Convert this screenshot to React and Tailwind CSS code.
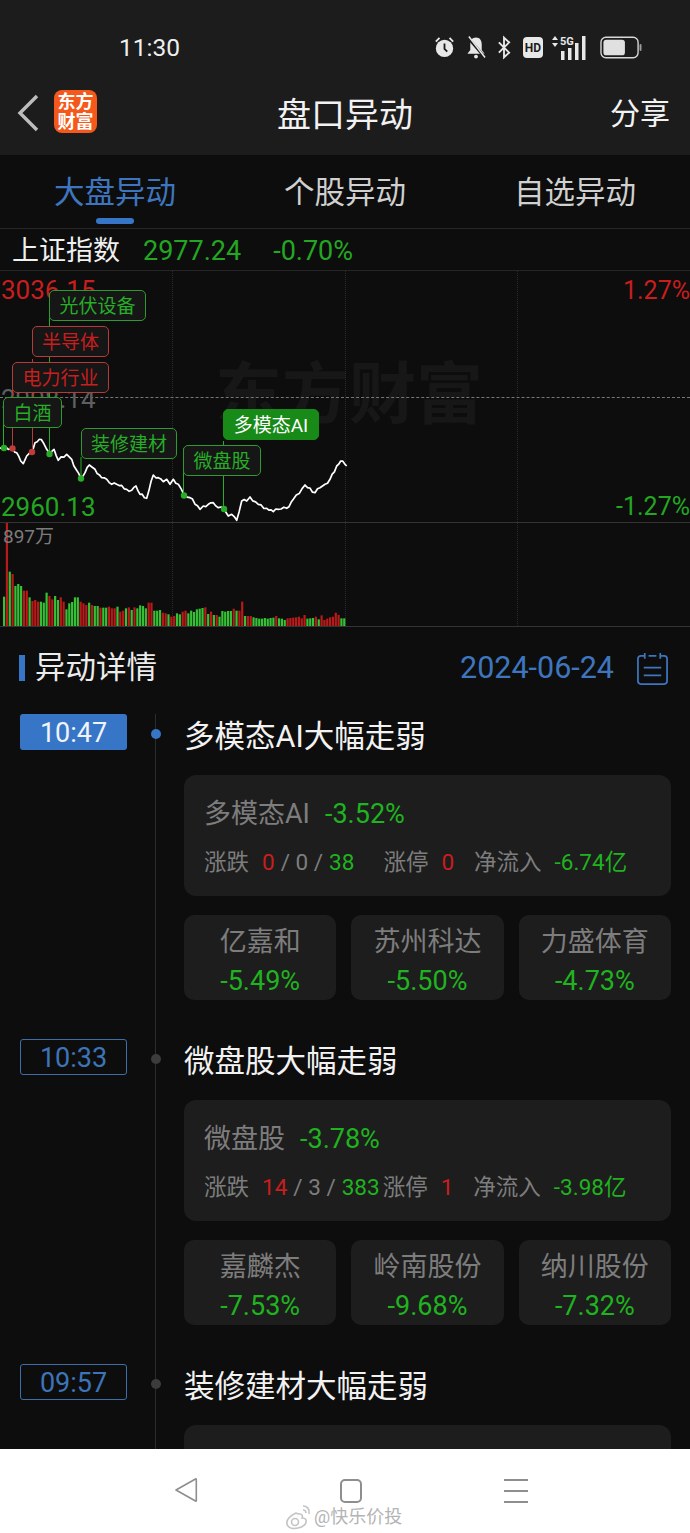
const F = { fontFamily: '"Roboto","Noto Sans CJK SC",sans-serif' };

const linePts = [[0,530],[12,532],[25,535],[38,533],[50,545],[62,570],[70,578],[80,555],[90,545],[97,542],[105,515],[118,505],[130,515],[140,535],[150,550],[162,535],[175,568],[200,550],[215,565],[228,595],[243,622],[255,605],[268,582],[285,595],[305,620],[320,625],[335,640],[350,640],[380,655],[395,658],[408,645],[420,670],[440,682],[460,612],[475,620],[490,632],[500,625],[510,640],[520,625],[535,640],[552,672],[570,680],[600,715],[610,705],[625,700],[640,695],[655,710],[672,715],[685,735],[695,730],[710,748],[725,690],[740,690],[750,678],[775,700],[800,712],[820,722],[835,715],[860,712],[880,685],[915,642],[945,665],[960,650],[975,640],[990,625],[1010,585],[1022,570],[1035,580],[1040,585]];

function jagged(pts) {
  const out = [];
  for (let i = 0; i < pts.length - 1; i++) {
    const [x0, y0] = pts[i];
    const [x1, y1] = pts[i + 1];
    const n = Math.max(1, Math.round((x1 - x0) / 8));
    for (let k = 0; k < n; k++) {
      const t = k / n;
      const noise = k === 0 ? 0 : (((i * 7 + k * 13) % 5) - 2) * 2.2;
      out.push([x0 + (x1 - x0) * t, y0 + (y1 - y0) * t + noise]);
    }
  }
  out.push(pts[pts.length - 1]);
  return out;
}
const linePath = jagged(linePts).map(([x, y]) => `${(x / 3).toFixed(1)},${(y / 3).toFixed(1)}`).join(' ');

const vols = 'g230 r0 g155 r162 g198 g192 g198 r212 r212 g232 r243 r240 r245 g245 g248 g218 r228 r238 g228 g240 r232 r245 g268 g250 g246 g232 g232 r245 r250 r255 g248 r255 g258 g258 r263 g263 g263 r260 r265 r265 g260 r275 r272 g265 r262 g270 r262 g265 g256 g258 g265 r248 r248 g272 g272 g270 r278 r280 g283 r290 r288 g280 g283 r275 r272 g280 g272 g276 g268 g266 g264 r262 g282 r275 g285 r285 g290 g273 g275 g273 g273 r266 g272 r272 r245 g288 r288 r288 g292 g294 g296 g296 g294 g296 g294 g293 r288 g295 g296 g300 r295 r294 r293 r292 r290 r295 r285 g296 g295 g294 r290 g298 r286 r300 r296 r292 r290 r278 r285 g295 g295'.split(' ');

const G = '#27ad27';
const R = '#c81e1e';

function Tag({ left, top, w, h = 31, color, text, solid, children }) {
  return (
    <div
      className="absolute flex items-center justify-center rounded-[5px] border pt-[2px] text-[19px] leading-none"
      style={{
        left, top, width: w, height: h, borderColor: color,
        color: solid ? '#ffffff' : text,
        background: solid ? '#178a17' : '#161616',
      }}
    >
      {children}
    </div>
  );
}

function Chart() {
  return (
    <div className="relative h-[251px] overflow-hidden">
      <div className="absolute left-[215px] top-[86px] text-[67px] leading-[76px] font-bold whitespace-nowrap text-[#171717]">东方财富</div>
      <div className="absolute left-[172px] top-0 h-full border-l border-dotted border-[#2a2a2a]" />
      <div className="absolute left-[345px] top-0 h-full border-l border-dotted border-[#2a2a2a]" />
      <div className="absolute left-[517px] top-0 h-full border-l border-dotted border-[#2a2a2a]" />
      <div className="absolute left-0 right-0 top-[126px] border-t border-dashed border-[#777777]" />
      <div className="absolute left-[1px] top-[3px] text-[26px] leading-[32px] text-[#c81e1e]">3036.15</div>
      <div className="absolute left-[1px] top-[112px] text-[26px] leading-[32px] text-[#5f5f5f]">2998.14</div>
      <div className="absolute left-[1px] top-[220px] text-[26px] leading-[32px] text-[#23a723]">2960.13</div>
      <div className="absolute right-0 top-[4px] text-[25px] leading-[32px] text-[#c81e1e]">1.27%</div>
      <div className="absolute right-0 top-[220px] text-[25px] leading-[32px] text-[#23a723]">-1.27%</div>

      <svg className="absolute left-0 top-0" width="350" height="251" viewBox="0 0 350 251">
        <polyline points={linePath} fill="none" stroke="#ffffff" strokeWidth="1.7" strokeLinejoin="round" />
        <g stroke={G} strokeWidth="1">
          <line x1="3.5" y1="130" x2="3.5" y2="177" />
          <line x1="49.5" y1="22" x2="49.5" y2="183" />
          <line x1="81" y1="186" x2="81" y2="207" />
          <line x1="183.5" y1="177" x2="183.5" y2="224" />
          <line x1="223.5" y1="170" x2="223.5" y2="238" />
        </g>
        <g stroke="#b53a3a" strokeWidth="1">
          <line x1="12.5" y1="118" x2="12.5" y2="177" />
          <line x1="32.5" y1="88" x2="32.5" y2="181" />
        </g>
        <circle cx="4" cy="177" r="3.2" fill={G} />
        <circle cx="12.5" cy="177.5" r="3.2" fill="#c23b3b" />
        <circle cx="32" cy="181" r="3.2" fill="#c23b3b" />
        <circle cx="49.5" cy="183" r="3.2" fill={G} />
        <circle cx="81" cy="207.5" r="3.2" fill={G} />
        <circle cx="184" cy="224.5" r="3.2" fill={G} />
        <circle cx="224" cy="238" r="3.2" fill={G} />
      </svg>

      <Tag left={49} top={19} w={97} color="#2f9a2f" text={G}>光伏设备</Tag>
      <Tag left={32} top={55} w={77} color="#b53a3a" text={R}>半导体</Tag>
      <Tag left={12} top={91} w={97} color="#b53a3a" text={R}>电力行业</Tag>
      <Tag left={3} top={126} w={59} color="#2f9a2f" text={G}>白酒</Tag>
      <Tag left={81} top={157} w={96} color="#2f9a2f" text={G}>装修建材</Tag>
      <Tag left={183} top={174} w={78} color="#2f9a2f" text={G}>微盘股</Tag>
      <Tag left={223} top={138} w={96} color="#178a17" solid>多模态AI</Tag>
    </div>
  );
}

function Volume() {
  return (
    <div className="relative h-[104px] border-t border-[#333333] overflow-hidden">
      <div className="absolute left-[172px] top-0 h-full border-l border-dotted border-[#2a2a2a]" />
      <div className="absolute left-[345px] top-0 h-full border-l border-dotted border-[#2a2a2a]" />
      <div className="absolute left-[517px] top-0 h-full border-l border-dotted border-[#2a2a2a]" />
      <svg className="absolute left-0 top-0" width="350" height="104" viewBox="0 0 350 104">
        {vols.map((v, i) => {
          const top = Math.max(Number(v.slice(1)) / 3 - 3, 0);
          return <rect key={i} x={3 + (i * 343) / vols.length} y={top} width="2.2" height={104 - top} fill={v[0] === 'g' ? '#35c035' : '#b81a1a'} />;
        })}
      </svg>
      <div className="absolute left-[3px] top-[1px] text-[19px] leading-[26px] text-[#7c7c7c]">897万</div>
    </div>
  );
}

function Stock({ name, pct }) {
  return (
    <div className="flex-1 h-[85px] rounded-[10px] bg-[#1d1d1d] flex flex-col items-center pt-[8px]">
      <div className="text-[27px] leading-[39px] text-[#7d7d7d]">{name}</div>
      <div className="text-[27px] leading-[39px] text-[#1fb31f]">{pct}</div>
    </div>
  );
}

function Item({ time, active, title, cardName, cardPct, up, mid, down, upGap, limit, flow, stocks, last }) {
  return (
    <div className={`flex ${last ? 'h-[120px]' : 'h-[325px]'}`}>
      <div className="w-[107px] ml-[20px] shrink-0">
        <div
          className={`h-[36px] rounded-[3px] flex items-center justify-center pt-[3px] text-[27px] ${
            active ? 'bg-[#3776c6] text-[#f0f4fa]' : 'border border-[#3d6ea8] text-[#3d74b8]'
          }`}
        >
          {time}
        </div>
      </div>
      <div className="w-[57px] shrink-0 relative flex justify-center">
        <div className="w-px h-full bg-[#2c2c2c]" />
        <div className={`absolute top-[15px] w-[10px] h-[10px] rounded-full ${active ? 'bg-[#3776c6]' : 'bg-[#3c3c3c]'}`} />
      </div>
      <div className="w-[487px] shrink-0">
        <div className="text-[30.5px] leading-[44px] text-[#f2f2f2] pt-[1px] mb-[16px] whitespace-nowrap">{title}</div>
        <div className="h-[121px] rounded-[12px] bg-[#1d1d1d] px-[20px] pt-[19px]">
          <div className="flex items-center h-[40px] whitespace-nowrap">
            <span className="text-[27px] text-[#7d7d7d]">{cardName}</span>
            <span className="text-[27px] text-[#1fb31f] ml-[15px]">{cardPct}</span>
          </div>
          {up !== undefined && (
            <div className="flex items-center h-[40px] mt-[9px] text-[22.5px] text-[#7d7d7d] whitespace-nowrap">
              <span>涨跌</span>
              <span className="ml-[13px] text-[#c81e1e]">{up}</span>
              <span className="ml-[6px]">/ {mid} /</span>
              <span className="ml-[6px] text-[#1fb31f]">{down}</span>
              <span style={{ marginLeft: upGap }}>涨停</span>
              <span className="ml-[13px] text-[#c81e1e]">{limit}</span>
              <span className="ml-[20px]">净流入</span>
              <span className="ml-[13px] text-[#1fb31f]">{flow}</span>
            </div>
          )}
        </div>
        {stocks && (
          <div className="flex gap-[15px] mt-[19px]">
            {stocks.map(([n, p]) => <Stock key={n} name={n} pct={p} />)}
          </div>
        )}
      </div>
    </div>
  );
}

function StatusIcons() {
  return (
    <div className="flex items-center text-[#e8e8e8]">
      <svg width="21" height="25" viewBox="0 0 23 25">
        <circle cx="11.5" cy="13.5" r="9.5" fill="#e8e8e8" />
        <path d="M11.5 8v6l3 3" stroke="#1c1c1c" strokeWidth="2" fill="none" />
        <path d="M2 6l4-4M21 6l-4-4" stroke="#e8e8e8" strokeWidth="2" />
      </svg>
      <svg className="ml-[11px]" width="20" height="25" viewBox="0 0 21 25">
        <path d="M10.5 2c-4 0-6 3-6 7v6l-3 4h18l-3-4V9c0-4-2-7-6-7z" fill="#e8e8e8" />
        <circle cx="10.5" cy="22" r="2" fill="#e8e8e8" />
        <path d="M2 2l18 21" stroke="#1c1c1c" strokeWidth="3" />
        <path d="M3 1l17 22" stroke="#e8e8e8" strokeWidth="1.6" />
      </svg>
      <svg className="ml-[11px]" width="14" height="25" viewBox="0 0 15 25">
        <path d="M2 7l11 11-5.5 5V2L13 7 2 18" fill="none" stroke="#e8e8e8" strokeWidth="2" />
      </svg>
      <div className="w-[20px] h-[21px] rounded-[4px] bg-[#e8e8e8] ml-[12px] flex items-center justify-center text-[12px] font-bold leading-none text-[#1c1c1c]">HD</div>
      <svg className="ml-[8px]" width="38" height="27" viewBox="0 0 38 27">
        <path d="M1 6l3-4 3 4zM1 9l3 4 3-4z" fill="#e8e8e8" />
        <text x="9" y="11" fontSize="11" fontWeight="700" fill="#e8e8e8" fontFamily="Roboto">5G</text>
        <rect x="10" y="17" width="3.5" height="9" fill="#e8e8e8" />
        <rect x="17" y="14" width="3.5" height="12" fill="#e8e8e8" />
        <rect x="24" y="9" width="3.5" height="17" fill="#e8e8e8" />
        <rect x="31" y="2" width="3.5" height="24" fill="#e8e8e8" />
      </svg>
      <svg className="ml-[11px]" width="42" height="25" viewBox="0 0 43 25">
        <rect x="1" y="2" width="38" height="21" rx="5" fill="none" stroke="#d8d8d8" strokeWidth="1.4" />
        <rect x="3.5" y="4.5" width="22" height="16" rx="3" fill="#e0e0e0" />
        <rect x="40.5" y="9" width="2" height="7" rx="1" fill="#9a9a9a" />
      </svg>
    </div>
  );
}

export default function App() {
  return (
    <div className="w-[690px] h-[1533px] flex flex-col bg-[#0d0d0d] overflow-hidden" style={F}>
      <div className="h-[155px] shrink-0 bg-[#1c1c1c]">
        <div className="h-[80px] flex items-end justify-between pb-[19px]">
          <div className="ml-[119px] -mb-[2px] text-[24.5px] leading-[30px] text-[#efefef]">11:30</div>
          <div className="mr-[48px]"><StatusIcons /></div>
        </div>
        <div className="relative h-[66px] flex items-center">
          <svg className="ml-[17px]" width="22" height="38" viewBox="0 0 22 38">
            <path d="M20 2L3 19l17 17" fill="none" stroke="#bdbdbd" strokeWidth="3.4" />
          </svg>
          <div className="ml-[15px] -mt-[3px] w-[43px] h-[43px] rounded-[8px] bg-[#f4581a] flex flex-col items-center justify-center text-[18px] leading-[20px] font-bold text-white">
            <span>东方</span><span>财富</span>
          </div>
          <div className="absolute left-0 right-0 top-[13px] text-center text-[34px] leading-[44px] text-[#f2f2f2]">盘口异动</div>
          <div className="ml-auto mr-[20px] mt-[1px] text-[30px] leading-[44px] text-[#f2f2f2]">分享</div>
        </div>
      </div>

      <div className="h-[1294px] shrink-0 overflow-hidden">
        <div className="relative h-[74px] flex items-center border-b border-[#262626] pt-[2px]">
          <div className="w-[230px] text-center text-[30.5px] text-[#3d76bf]">大盘异动</div>
          <div className="w-[230px] text-center text-[30.5px] text-[#d0d0d0]">个股异动</div>
          <div className="w-[230px] text-center text-[30.5px] text-[#d0d0d0]">自选异动</div>
          <div className="absolute left-[96px] top-[63px] w-[38px] h-[6px] rounded-full bg-[#3776c6]" />
        </div>
        <div className="h-[42px] flex items-center border-b border-[#262626] whitespace-nowrap pt-[3px]">
          <span className="ml-[12px] text-[27px] text-[#f0f0f0]">上证指数</span>
          <span className="ml-[23px] text-[27px] text-[#23a723]">2977.24</span>
          <span className="ml-[32px] text-[27px] text-[#23a723]">-0.70%</span>
        </div>
        <Chart />
        <Volume />
        <div className="border-t border-[#333333] h-[88px] flex items-center pb-[5px]">
          <div className="ml-[19px] w-[6px] h-[26px] bg-[#3776c6]" />
          <span className="ml-[10px] text-[30.5px] text-[#ececec]">异动详情</span>
          <span className="ml-auto text-[30.5px] text-[#3d76bf]">2024-06-24</span>
          <svg className="ml-[22px] mr-[21px]" width="33" height="33" viewBox="0 0 34 34" fill="none" stroke="#3d76bf" strokeWidth="1.8">
            <path d="M9 4H5a3 3 0 0 0-3 3v23a3 3 0 0 0 3 3h24a3 3 0 0 0 3-3V7a3 3 0 0 0-3-3h-4" />
            <path d="M9 1v6M25 1v6M13 4h8M8 16h18M8 24h18" />
          </svg>
        </div>
        <Item
          time="10:47" active title="多模态AI大幅走弱" cardName="多模态AI" cardPct="-3.52%"
          up="0" mid="0" down="38" upGap="29px" limit="0" flow="-6.74亿"
          stocks={[['亿嘉和', '-5.49%'], ['苏州科达', '-5.50%'], ['力盛体育', '-4.73%']]}
        />
        <Item
          time="10:33" title="微盘股大幅走弱" cardName="微盘股" cardPct="-3.78%"
          up="14" mid="3" down="383" upGap="3px" limit="1" flow="-3.98亿"
          stocks={[['嘉麟杰', '-7.53%'], ['岭南股份', '-9.68%'], ['纳川股份', '-7.32%']]}
        />
        <Item time="09:57" title="装修建材大幅走弱" last cardName="" cardPct="" />
      </div>

      <div className="relative flex-1 bg-white">
        <svg className="absolute left-[174px] top-[28px]" width="24" height="26" viewBox="0 0 24 26" fill="none" stroke="#8e8e8e" strokeWidth="1.6">
          <path d="M21.5 2L2 13l19.5 11c.5.2.8 0 .8-.5V2.5c0-.5-.3-.7-.8-.5z" strokeLinejoin="round" />
        </svg>
        <div className="absolute left-[340px] top-[30px] w-[22px] h-[24px] rounded-[5px] border-2 border-[#8e8e8e]" />
        <div className="absolute left-[504px] top-[30px] w-[24px] flex flex-col gap-[9px]">
          <div className="h-[2px] bg-[#8e8e8e]" />
          <div className="h-[2px] bg-[#8e8e8e]" />
          <div className="h-[2px] bg-[#8e8e8e]" />
        </div>
        <svg className="absolute left-[285px] top-[55px]" width="28" height="26" viewBox="0 0 28 26" fill="none" stroke="#c4c4c4" strokeWidth="1.6">
          <path d="M11 9C5 12 1 16 2 20c1 4 6 5 11 4 5-1 9-4 8-8-.6-2-3-2-4-2 1-2 0-4-2-4-1 0-3 0-4-1z" />
          <circle cx="10" cy="18" r="3.5" />
          <path d="M18 2c4 0 7 3 6 8M18 6c2 0 3 1 3 3" />
        </svg>
        <div className="absolute left-[314px] top-[55px] text-[18px] leading-[26px] text-[#b4b4b4] whitespace-nowrap">@快乐价投</div>
      </div>
    </div>
  );
}
